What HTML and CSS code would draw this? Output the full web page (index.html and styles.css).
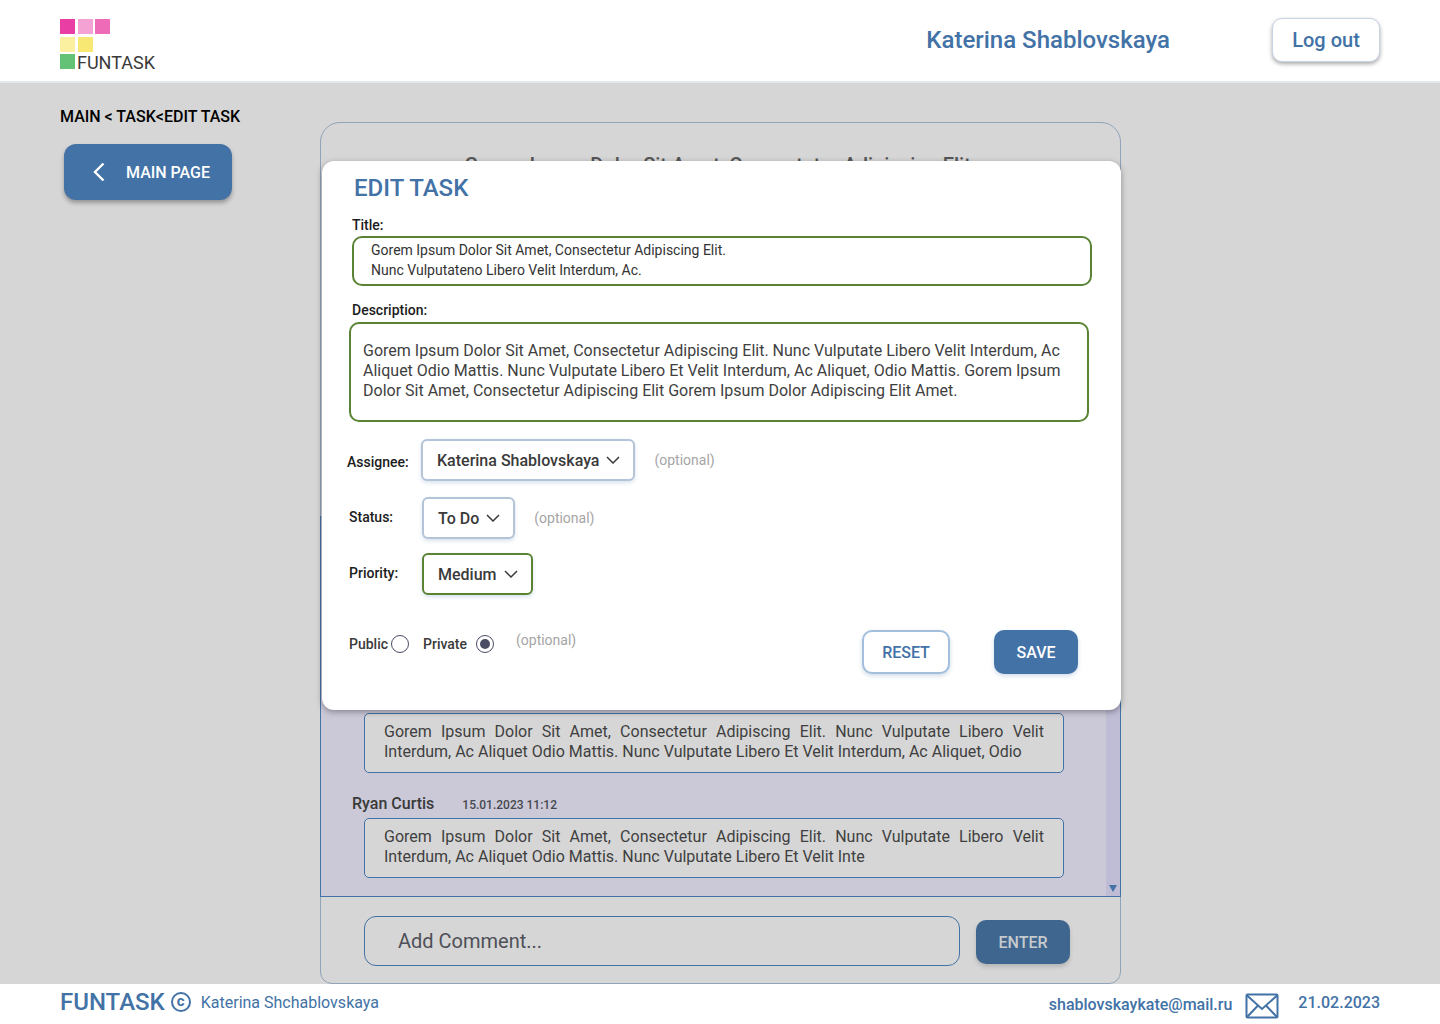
FILE: index.html
```html
<!DOCTYPE html>
<html lang="en">
<head>
    <meta charset="UTF-8">
    <meta name="viewport" content="width=device-width, initial-scale=1.0">
    <title>FUNTASK - Edit task</title>
    <link rel="stylesheet" href="styles.css">
</head>
<body>
    <header class="header">
        <div class="logo">
            <span class="logo-cell c1"></span><span class="logo-cell c2"></span><span class="logo-cell c3"></span>
            <span class="logo-cell c4"></span><span class="logo-cell c5"></span><span class="logo-cell"></span>
            <span class="logo-cell c6"></span><span class="logo-text">FUNTASK</span>
        </div>
        <div class="header-right">
            <span class="user-name">Katerina Shablovskaya</span>
            <button type="button" class="btn-logout">Log out</button>
        </div>
    </header>

    <main class="main">
        <aside class="sidebar">
            <div class="crumbs">MAIN &lt; TASK&lt;EDIT TASK</div>
            <button type="button" class="btn-back">
                <svg width="14" height="20" viewBox="0 0 14 20" fill="none" stroke="#fff" stroke-width="2.4"><path d="M11.5 1.5 3 10l8.5 8.5"/></svg>
                MAIN PAGE
            </button>
        </aside>

        <section class="panel">
            <div class="panel-title">Gorem Ipsum Dolor Sit Amet, Consectetur Adipiscing Elit.</div>
            <div class="comments">
                <div class="comment-list">
                    <div class="comment">
                        <div class="comment-head"><span class="comment-name">Ryan Curtis</span><span class="comment-date">15.01.2023 11:12</span></div>
                        <div class="comment-box">Gorem Ipsum Dolor Sit Amet, Consectetur Adipiscing Elit. Nunc Vulputate Libero Velit Interdum, Ac Aliquet Odio Mattis. Nunc Vulputate Libero Et Velit Interdum, Ac Aliquet, Odio</div>
                    </div>
                    <div class="comment">
                        <div class="comment-head"><span class="comment-name">Ryan Curtis</span><span class="comment-date">15.01.2023 11:12</span></div>
                        <div class="comment-box">Gorem Ipsum Dolor Sit Amet, Consectetur Adipiscing Elit. Nunc Vulputate Libero Velit Interdum, Ac Aliquet Odio Mattis. Nunc Vulputate Libero Et Velit Inte</div>
                    </div>
                </div>
                <div class="scrollbar"><span class="scroll-arrow"></span></div>
            </div>
            <div class="add-comment">
                <div class="comment-input">Add Comment...</div>
                <button type="button" class="btn-enter">ENTER</button>
            </div>

            <div class="modal">
                <h2 class="modal-title">EDIT TASK</h2>
                <div class="label title-label">Title:</div>
                <div class="title-box">Gorem Ipsum Dolor Sit Amet, Consectetur Adipiscing Elit.<br>Nunc Vulputateno Libero Velit Interdum, Ac.</div>
                <div class="label title-label desc-label">Description:</div>
                <div class="desc-box">Gorem Ipsum Dolor Sit Amet, Consectetur Adipiscing Elit. Nunc Vulputate Libero Velit Interdum, Ac Aliquet Odio Mattis. Nunc Vulputate Libero Et Velit Interdum, Ac Aliquet, Odio Mattis. Gorem Ipsum Dolor Sit Amet, Consectetur Adipiscing Elit Gorem Ipsum Dolor Adipiscing Elit Amet.</div>

                <div class="field-row assignee-row">
                    <span class="label row-label">Assignee:</span>
                    <div class="select">Katerina Shablovskaya
                        <svg class="chevron" width="14" height="8" viewBox="0 0 14 8" fill="none" stroke="#3a3a3a" stroke-width="1.5"><path d="M1 1l6 6 6-6"/></svg>
                    </div>
                    <span class="optional">(optional)</span>
                </div>
                <div class="field-row status-row">
                    <span class="label row-label indent">Status:</span>
                    <div class="select">To Do
                        <svg class="chevron" width="14" height="8" viewBox="0 0 14 8" fill="none" stroke="#3a3a3a" stroke-width="1.5"><path d="M1 1l6 6 6-6"/></svg>
                    </div>
                    <span class="optional">(optional)</span>
                </div>
                <div class="field-row priority-row">
                    <span class="label row-label indent">Priority:</span>
                    <div class="select select-active">Medium
                        <svg class="chevron" width="14" height="8" viewBox="0 0 14 8" fill="none" stroke="#3a3a3a" stroke-width="1.5"><path d="M1 1l6 6 6-6"/></svg>
                    </div>
                </div>

                <div class="modal-bottom">
                    <div class="radios">
                        <span class="radio-label">Public</span><span class="radio"></span>
                        <span class="radio-label private-label">Private</span><span class="radio radio-on"></span>
                    </div>
                    <span class="optional optional-radio">(optional)</span>
                    <button type="button" class="btn-reset">RESET</button>
                    <button type="button" class="btn-save">SAVE</button>
                </div>
            </div>
        </section>
    </main>

    <footer class="footer">
        <div class="footer-left">
            <span class="footer-brand">FUNTASK</span>
            <span class="copy">c</span>
            <span class="footer-author">Katerina Shchablovskaya</span>
        </div>
        <div class="footer-right">
            <span class="footer-mail">shablovskaykate@mail.ru</span>
            <svg class="mail-icon" width="34" height="26" viewBox="0 0 34 26" fill="none" stroke="#4272a6" stroke-width="2"><rect x="1.5" y="1.5" width="31" height="23" rx="1"/><path d="M2 2.5 17 16 32 2.5M2 24l11-11.500M32 24 21 12.500"/></svg>
            <span class="footer-date">21.02.2023</span>
        </div>
    </footer>
</body>
</html>
```

FILE: styles.css
```css
* {
    box-sizing: border-box;
}
body {
    font-family: Roboto, "Liberation Sans", sans-serif;
    background-color: #d6d6d6;
    color: #3a3a3a;
    margin: 0;
    height: 100vh;
    display: flex;
    flex-direction: column;
    overflow: hidden;
}
button {
    font-family: inherit;
    cursor: pointer;
}

/* header */
.header {
    height: 83px;
    flex: none;
    background-color: #fff;
    border-bottom: 2px solid #e2e8ee;
    padding: 18px 60px 0;
    display: flex;
    justify-content: space-between;
    align-items: flex-start;
}
.logo {
    margin-top: 1px;
    display: grid;
    grid-template-columns: 15px 15px 15px;
    grid-auto-rows: 15px;
    gap: 2.500px;
    width: 50px;
}
.logo-cell.c1 { background-color: #e93fa5; }
.logo-cell.c2 { background-color: #f4a2d4; }
.logo-cell.c3 { background-color: #ee6cb7; }
.logo-cell.c4 { background-color: #fbf09f; }
.logo-cell.c5 { background-color: #f7e874; }
.logo-cell.c6 { background-color: #64c276; }
.logo-text {
    font-size: 18px;
    line-height: 18px;
    margin-top: 0;
    color: #3a3a3a;
    white-space: nowrap;
    grid-column: 2 / 4;
    margin-left: -0.500px;
}
.header-right {
    display: flex;
    align-items: center;
}
.user-name {
    font-size: 24px;
    font-weight: 500;
    color: #4272a6;
}
.btn-logout {
    margin-left: 102px;
    width: 108px;
    height: 44px;
    background-color: #fff;
    color: #4272a6;
    border: 1px solid #c6d4e6;
    border-radius: 10px;
    font-size: 20px;
    font-weight: 500;
    box-shadow: 0 2px 4px rgba(0, 0, 0, 0.35);
}

/* main */
.main {
    flex: 1;
    min-height: 0;
    display: flex;
    padding-left: 60px;
}
.sidebar {
    width: 260px;
    flex: none;
    padding-top: 24px;
}
.crumbs {
    font-size: 16px;
    line-height: 19px;
    font-weight: 500;
    color: #000;
}
.btn-back {
    margin: 18px 0 0 4px;
    width: 168px;
    height: 56px;
    padding: 0 0 0 28px;
    display: flex;
    align-items: center;
    gap: 20px;
    background-color: #4272a6;
    color: #fff;
    border: none;
    border-radius: 12px;
    font-size: 16px;
    font-weight: 500;
    box-shadow: 0 3px 4px rgba(0, 0, 0, 0.3);
}

/* task panel behind the dialog */
.panel {
    position: relative;
    margin-top: 39px;
    width: 801px;
    height: 862px;
    border: 1px solid #8fa3b9;
    border-radius: 20px 20px 12px 12px;
    display: flex;
    flex-direction: column;
}
.panel-title {
    flex: 1;
    padding-top: 30px;
    text-align: center;
    font-size: 20px;
    line-height: 24px;
    font-weight: 500;
    color: #555;
}
.comments {
    height: 381px;
    flex: none;
    margin: 0 -1px;
    display: flex;
    background-color: #cbc9d8;
    border: 1px solid #4272a6;
    border-top: none;
    overflow: hidden;
}
.comment-list {
    flex: 1;
    display: flex;
    flex-direction: column;
    justify-content: flex-end;
    gap: 21px;
    padding: 0 0 18px 31px;
}
.comment-head {
    display: flex;
    align-items: baseline;
    height: 19px;
    line-height: 19px;
}
.comment-name {
    font-size: 16px;
    font-weight: 500;
    color: #3a3a3a;
}
.comment-date {
    margin-left: 28px;
    font-size: 12px;
    font-weight: 500;
    color: #46484e;
}
.comment-box {
    margin: 5px 0 0 12px;
    width: 700px;
    height: 60px;
    padding: 8px 19px 0;
    border: 1px solid #4272a6;
    border-radius: 5px;
    background-color: #d6d6d6;
    font-size: 16px;
    line-height: 20px;
    text-align: justify;
    color: #3f3f3f;
}
.scrollbar {
    width: 14px;
    flex: none;
    background-color: #bfbcd6;
    display: flex;
    flex-direction: column;
    justify-content: flex-end;
    align-items: center;
    padding-bottom: 4px;
}
.scroll-arrow {
    width: 0;
    height: 0;
    border-left: 4.500px solid transparent;
    border-right: 4.500px solid transparent;
    border-top: 7px solid #4272a6;
}
.add-comment {
    height: 86px;
    flex: none;
    display: flex;
    align-items: flex-start;
    padding: 19px 0 0 43px;
}
.comment-input {
    width: 596px;
    height: 50px;
    padding-left: 33px;
    border: 1px solid #4272a6;
    border-radius: 12px;
    font-size: 20px;
    line-height: 48px;
    color: #4f5058;
}
.btn-enter {
    margin: 4px 0 0 16px;
    width: 94px;
    height: 44px;
    background-color: #3f668f;
    color: #c6cacd;
    border: none;
    border-radius: 10px;
    font-size: 16px;
    font-weight: 500;
    box-shadow: 0 3px 4px rgba(0, 0, 0, 0.15);
}

/* dialog */
.modal {
    position: absolute;
    left: 1px;
    top: 38px;
    width: 799px;
    height: 549px;
    padding: 13px 0 0 25px;
    background-color: #fff;
    border-radius: 12px;
    box-shadow: 0 2px 6px rgba(0, 0, 0, 0.35);
}
.modal-title {
    margin: 0 0 0 7px;
    font-size: 24px;
    line-height: 28px;
    font-weight: 500;
    color: #4272a6;
}
.label {
    font-size: 14px;
    line-height: 16px;
    font-weight: 500;
    color: #1c1c1c;
}
.title-label {
    margin: 15px 0 0 5px;
}
.title-box {
    margin: 3px 0 0 5px;
    width: 740px;
    height: 50px;
    padding: 2px 17px;
    border: 2px solid #5a8434;
    border-radius: 10px;
    font-size: 14px;
    line-height: 20px;
    color: #333;
}
.desc-label {
    margin-top: 16px;
}
.desc-box {
    margin: 4px 0 0 2px;
    width: 740px;
    height: 100px;
    padding: 17px 26px 0 12px;
    border: 2px solid #5a8434;
    border-radius: 10px;
    font-size: 16px;
    line-height: 20px;
    color: #3f3f3f;
}
.field-row {
    display: flex;
    align-items: center;
}
.assignee-row {
    margin-top: 17px;
}
.status-row {
    margin-top: 16px;
}
.priority-row {
    margin-top: 14px;
}
.row-label {
    width: 74px;
    padding-top: 4px;
}
.row-label.indent {
    margin-left: 2px;
    width: 73px;
    padding-top: 0;
    margin-top: -3px;
}
.select {
    height: 42px;
    padding: 0 13px 0 14px;
    display: flex;
    align-items: center;
    gap: 7px;
    border: 2px solid #b3c3d8;
    border-radius: 6px;
    font-size: 16px;
    font-weight: 500;
    color: #3a3a3a;
    background-color: #fff;
    box-shadow: 0 2px 4px rgba(66, 114, 166, 0.2);
}
.select-active {
    border-color: #5a8434;
}
.chevron {
    flex: none;
}
.optional {
    font-size: 14px;
    line-height: 16px;
    color: #a5a5a5;
    margin-left: 19px;
}
.modal-bottom {
    margin-top: 35px;
    display: flex;
    align-items: flex-start;
}
.radios {
    margin: 5px 0 0 2px;
    display: flex;
    align-items: center;
}
.radio-label {
    font-size: 14px;
    line-height: 18px;
    font-weight: 500;
    color: #3a3a3a;
    width: 42px;
}
.private-label {
    margin-left: 14px;
    width: 53px;
}
.radio {
    width: 18px;
    height: 18px;
    border: 1px solid #4a4d63;
    border-radius: 50%;
    background-color: #fff;
    display: flex;
    align-items: center;
    justify-content: center;
}
.radio-on::after {
    content: "";
    width: 10px;
    height: 10px;
    border-radius: 50%;
    background-color: #4a4d63;
}
.optional-radio {
    margin: 2px 0 0 22px;
}
.btn-reset {
    margin-left: auto;
    width: 88px;
    height: 44px;
    background-color: #fff;
    color: #4272a6;
    border: 2px solid #a3bfdb;
    border-radius: 10px;
    font-size: 16px;
    font-weight: 500;
    box-shadow: 0 2px 4px rgba(66, 114, 166, 0.25);
}
.btn-save {
    margin: 0 43px 0 44px;
    width: 84px;
    height: 44px;
    background-color: #4272a6;
    color: #fff;
    border: none;
    border-radius: 10px;
    font-size: 16px;
    font-weight: 500;
    box-shadow: 0 2px 4px rgba(66, 114, 166, 0.25);
}

/* footer */
.footer {
    position: relative;
    height: 40px;
    flex: none;
    background-color: #fff;
    padding: 0 60px;
    display: flex;
    justify-content: space-between;
    color: #4272a6;
}
.footer-left {
    display: flex;
    align-items: center;
    height: 36px;
}
.footer-brand {
    font-size: 24px;
    font-weight: 500;
}
.copy {
    margin-left: 6px;
    width: 20px;
    height: 20px;
    border: 2px solid #4272a6;
    border-radius: 50%;
    font-size: 15px;
    line-height: 14px;
    font-weight: 700;
    text-align: center;
}
.footer-author {
    margin-left: 10px;
    font-size: 16px;
}
.footer-right {
    display: flex;
    align-items: flex-start;
    padding-top: 9px;
}
.footer-mail {
    font-size: 16px;
    font-weight: 500;
    line-height: 24px;
}
.mail-icon {
    margin-left: 13px;
}
.footer-date {
    margin-left: 19px;
    font-size: 16px;
    font-weight: 500;
    line-height: 20px;
}
```
